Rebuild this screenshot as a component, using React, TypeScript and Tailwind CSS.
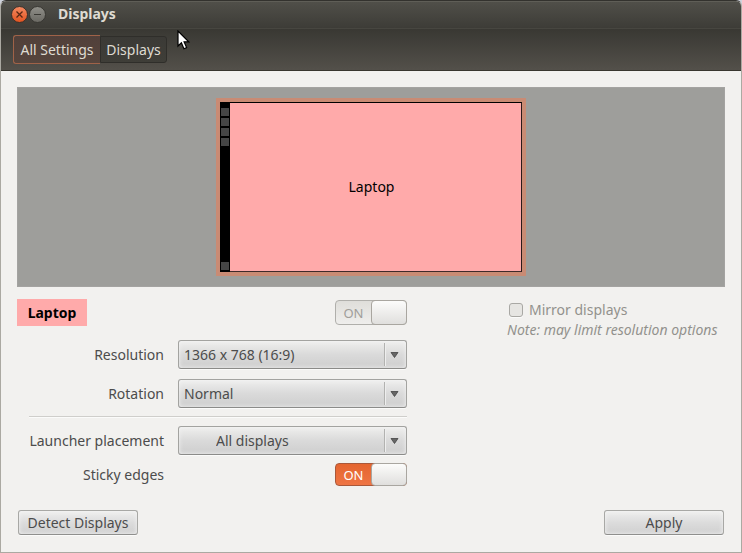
import { useState, type ReactNode } from "react";

function Switch({ id, label, disabled = false, className }: { id: string; label: string; disabled?: boolean; className: string }) {
  const [on, setOn] = useState(true);
  const track = disabled
    ? "border-[#b0afab] bg-linear-to-b from-[#dfdeda] to-[#efeeec] text-[#a09e9a]"
    : on
      ? "border-[#a9583a] bg-linear-to-b from-[#e4652f] to-[#ef7544] text-white"
      : "border-[#9a9994] bg-[#dfdeda] text-[#6c6b67]";
  return (
    <span className={`relative flex w-[72px] rounded-[4px] border text-[13px] ${track} ${on ? "" : "flex-row-reverse"} ${className}`}>
      <input
        id={id}
        type="checkbox"
        role="switch"
        aria-label={label}
        checked={on}
        disabled={disabled}
        onChange={(e) => setOn(e.target.checked)}
        className="absolute inset-0 m-0 size-full appearance-none"
      />
      <span className="flex w-[35px] items-center justify-center">{on ? "ON" : "OFF"}</span>
      <span className="pointer-events-none -my-px -mr-px flex-1 rounded-[4px] border border-[#a9a6a0] bg-linear-to-b from-[#fcfcfb] to-[#e0dfdd]" />
    </span>
  );
}

function Dropdown({ id, options, indent = false }: { id: string; options: string[]; indent?: boolean }) {
  return (
    <span className="relative block w-[229px]">
      <select
        id={id}
        className={`block h-[29px] w-full appearance-none rounded-[3px] border border-[#a3a3a0] border-b-[#8b8b89] bg-linear-to-b from-[#efefee] via-[#dadada] to-[#cecece] pr-8 text-[#4c4c4c] shadow-[inset_0_0_4px_#f4f4f4,0_1px_0_#fbfbfa] ${indent ? "pl-[37px]" : "pl-[5px]"}`}
      >
        {options.map((o) => (
          <option key={o}>{o}</option>
        ))}
      </select>
      <span className="pointer-events-none absolute inset-y-[3px] right-0 flex w-[23px] items-center justify-center border-l border-[#b2b2b0] shadow-[inset_1px_0_0_#eeeeee]">
        <svg width="9" height="6" viewBox="0 0 9 6" className="mr-1">
          <path d="M1 .5h7L4.5 5.5z" fill="#666" stroke="#444" strokeWidth=".8" strokeLinejoin="round" />
        </svg>
      </span>
    </span>
  );
}

function Row({ id, label, children }: { id: string; label: string; children: ReactNode }) {
  return (
    <div className="flex items-center justify-between">
      <label htmlFor={id} className="w-[147px] text-right">
        {label}
      </label>
      {children}
    </div>
  );
}

function PushButton({ children }: { children: ReactNode }) {
  return (
    <button
      type="button"
      className="h-[25px] w-[120px] rounded-[3px] border border-[#a8a8a5] border-b-[#8f8f8d] bg-linear-to-b from-[#efefee] via-[#dcdcdc] to-[#d0d0d0] whitespace-nowrap shadow-[inset_0_0_4px_#f4f4f4,0_1px_0_#fbfbfa]"
    >
      {children}
    </button>
  );
}

function TitleBar() {
  return (
    <header className="flex h-[27px] items-center border-t border-[#5f5e57] bg-linear-to-b from-[#504f49] to-[#3d3c37] pb-[2px] pl-[10px]">
      <div className="flex gap-px">
        <button type="button" aria-label="Close" className="size-[17px] rounded-full">
          <svg viewBox="0 0 17 17" className="size-[17px]">
            <defs>
              <linearGradient id="close-face" x1="0" y1="0" x2="0" y2="1">
                <stop offset="0" stopColor="#f58a62" />
                <stop offset="1" stopColor="#e2531f" />
              </linearGradient>
            </defs>
            <circle cx="8.5" cy="8.5" r="8" fill="url(#close-face)" stroke="#37302b" />
            <path d="M5.5 5.5l6 6m0-6l-6 6" stroke="#592713" strokeWidth="1.3" />
          </svg>
        </button>
        <button type="button" aria-label="Minimize" className="size-[17px] rounded-full">
          <svg viewBox="0 0 17 17" className="size-[17px]">
            <defs>
              <linearGradient id="min-face" x1="0" y1="0" x2="0" y2="1">
                <stop offset="0" stopColor="#91908a" />
                <stop offset="1" stopColor="#696862" />
              </linearGradient>
            </defs>
            <circle cx="8.5" cy="8.5" r="8" fill="url(#min-face)" stroke="#373631" />
            <path d="M5 8.5h7" stroke="#3a3934" strokeWidth="1.2" />
          </svg>
        </button>
      </div>
      <h1 className="ml-3 font-bold text-[#dfdbd2]">Displays</h1>
    </header>
  );
}

function Toolbar() {
  return (
    <nav className="flex h-[43px] items-center border-t border-b border-t-[#474640] border-b-[#38362f] bg-linear-to-b from-[#393833] to-[#53504a] pl-3 text-[#dfdbd2]">
      <button type="button" className="h-[29px] w-[87px] rounded-l-[3px] border border-r-0 border-[#a06248] bg-linear-to-b from-[#51403a] to-[#56453d] whitespace-nowrap">
        All Settings
      </button>
      <button type="button" className="h-[27px] w-[67px] rounded-r-[3px] border border-[#2f2e2a] bg-linear-to-b from-[#3b3a36] to-[#3f3e38] whitespace-nowrap">
        Displays
      </button>
    </nav>
  );
}

function MonitorPreview() {
  return (
    <section aria-label="Monitor arrangement" className="flex h-[200px] items-center justify-center border border-[#a4a3a1] bg-[#9e9e9b]">
      <div className="flex h-[178px] w-[310px] border-4 border-[#c98b74]">
        <div className="flex w-[10px] flex-col items-center gap-[2px] bg-black pt-[6px] pb-[2px]">
          <i className="size-2 bg-[#454545]" />
          <i className="size-2 bg-[#454545]" />
          <i className="size-2 bg-[#454545]" />
          <i className="size-2 bg-[#454545]" />
          <i className="mt-auto size-2 bg-[#454545]" />
        </div>
        <div className="flex flex-1 items-center justify-center border-y border-r border-t-black border-r-[#2b1a1a] border-b-[#3f2a2a] bg-[#ffaaaa] pr-2 text-black">
          Laptop
        </div>
      </div>
    </section>
  );
}

export default function App() {
  return (
    <div className="bg-[#cfd3dc]">
      <div className="relative flex min-h-screen flex-col overflow-hidden rounded-t-[6px] border border-[#aba9a2] border-t-[#33322e] bg-[#f2f1ef] font-['Noto_Sans','Open_Sans',sans-serif] text-[14px] leading-5 text-[#4c4c4c]">
        <TitleBar />
        <Toolbar />
        <main className="flex flex-1 flex-col px-4 pt-4 pb-[17px]">
          <MonitorPreview />
          <div className="mt-3 flex justify-between">
            <form className="w-[390px]">
              <div className="flex items-center justify-between">
                <h2 className="flex h-[27px] w-[70px] items-center justify-center bg-[#ffaaaa] font-bold text-black">Laptop</h2>
                <Switch id="enabled" label="Laptop display" disabled className="h-[25px]" />
              </div>
              <div className="mt-[14px] flex flex-col gap-[10px]">
                <Row id="resolution" label="Resolution">
                  <Dropdown id="resolution" options={["1366 x 768 (16:9)"]} />
                </Row>
                <Row id="rotation" label="Rotation">
                  <Dropdown id="rotation" options={["Normal"]} />
                </Row>
              </div>
              <hr className="my-2 ml-3 h-[2px] border-t border-b border-t-[#cfcecb] border-b-[#fbfbfa]" />
              <div className="flex flex-col gap-2">
                <Row id="launcher" label="Launcher placement">
                  <Dropdown id="launcher" options={["All displays"]} indent />
                </Row>
                <Row id="sticky" label="Sticky edges">
                  <Switch id="sticky" label="Sticky edges" className="h-[23px]" />
                </Row>
              </div>
            </form>
            <div className="w-[218px] pt-px text-[#92918d]">
              <div className="flex items-center gap-[6px] pl-[2px]">
                <input
                  id="mirror"
                  type="checkbox"
                  disabled
                  className="size-[14px] appearance-none rounded-[3px] border border-[#a9a8a4] bg-[#e6e5e2] shadow-[0_1px_0_#fbfbfa]"
                />
                <label htmlFor="mirror">Mirror displays</label>
              </div>
              <p className="whitespace-nowrap italic">Note: may limit resolution options</p>
            </div>
          </div>
          <footer className="mt-auto flex justify-between px-px">
            <PushButton>Detect Displays</PushButton>
            <PushButton>Apply</PushButton>
          </footer>
        </main>
        <svg aria-hidden="true" viewBox="0 0 13 20" className="pointer-events-none absolute top-[29px] left-[176px] h-5 w-[13px]">
          <path d="M1 1v15l3.4-3.2 2.5 5.9 2.7-1.1-2.5-5.8h4.6z" fill="#fff" stroke="#000" strokeWidth="1.2" />
        </svg>
      </div>
    </div>
  );
}
